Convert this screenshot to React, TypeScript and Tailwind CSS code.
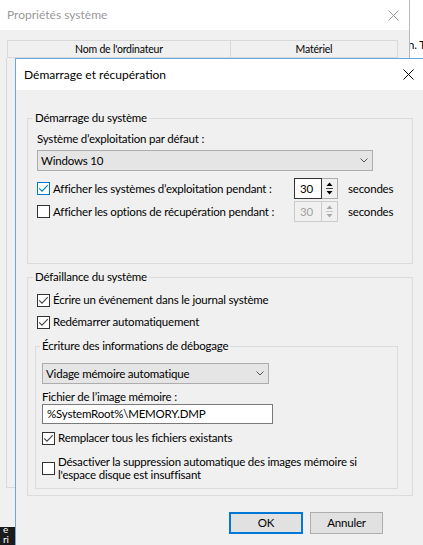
import React from "react";

const font = "font-['Lato','Segoe_UI',sans-serif]";

function Check({ checked = false, focus = false }: { checked?: boolean; focus?: boolean }) {
  return (
    <span
      className={`flex h-[13px] w-[13px] shrink-0 items-center justify-center border bg-white ${
        focus ? "border-[#0078d7]" : "border-[#333333]"
      }`}
    >
      {checked && (
        <svg width="11" height="11" viewBox="0 0 11 11">
          <path d="M1.2 5.3 L4 8.2 L9.8 2.2" fill="none" stroke={focus ? "#0078d7" : "#444444"} strokeWidth="1.1" />
        </svg>
      )}
    </span>
  );
}

function Chevron() {
  return (
    <svg width="8" height="5" viewBox="0 0 8 5">
      <path d="M0.5 0.5 L4 4 L7.5 0.5" fill="none" stroke="#555555" strokeWidth="1" />
    </svg>
  );
}

function Spinner({ disabled = false }: { disabled?: boolean }) {
  const arrow = disabled ? "#a8a8a8" : "#000000";
  return (
    <div className="flex h-[21px] w-[44px] shrink-0">
      <div
        className={`flex w-[28px] items-center border pl-[5px] ${
          disabled ? "border-[#cccccc] bg-[#f0f0f0] text-[#a0a0a0]" : "border-[#333333] bg-white text-black"
        }`}
      >
        30
      </div>
      <div className={`w-[16px] border border-l-0 ${disabled ? "border-[#cccccc]" : "border-[#adadad]"}`}>
        <svg width="15" height="19" viewBox="0 0 15 19">
          <path d="M4.5 7 L7.5 3.5 L10.5 7 Z" fill={arrow} />
          <path d="M4 9.5 H11" stroke={disabled ? "#c8c8c8" : "#444444"} strokeWidth="1" />
          <path d="M4.5 12 L7.5 15.5 L10.5 12 Z" fill={arrow} />
        </svg>
      </div>
    </div>
  );
}

function CloseX({ color }: { color: string }) {
  return (
    <svg width="11" height="11" viewBox="0 0 11 11">
      <path d="M0.5 0.5 L10.5 10.5 M10.5 0.5 L0.5 10.5" stroke={color} strokeWidth="1" />
    </svg>
  );
}

export default function App() {
  return (
    <div
      className={`relative h-[545px] w-[423px] overflow-hidden bg-[#f0f0f0] text-[11.5px] leading-[16px] tracking-[-0.2px] text-black ${font}`}
    >
      {/* window behind: Propriétés système */}
      <div className="absolute left-0 top-0 h-[545px] w-[410px] border-r border-[#b8b8b8] bg-[#f0f0f0]">
        <div className="flex h-[30px] items-center justify-between bg-white pl-[7px] pr-[10px] text-[12px] tracking-normal text-[#999999]">
          <span>Propriétés système</span>
          <CloseX color="#9a9a9a" />
        </div>
        <div className="ml-[7px] mt-[10px] flex h-[18px] w-[391px] text-[10.5px]">
          <div className="flex w-[224px] items-center justify-center border border-[#d9d9d9]">Nom de l'ordinateur</div>
          <div className="flex w-[167px] items-center justify-center border border-l-0 border-[#d9d9d9]">Matériel</div>
        </div>
        <div className="ml-[6px] h-[430px] w-[392px] border border-t-0 border-[#d9d9d9]" />
      </div>

      {/* another window at the right edge */}
      <div className="absolute left-[410px] top-0 h-[58px] w-[13px] overflow-hidden bg-white">
        <div className="-ml-[2px] mt-[37px] whitespace-nowrap">n. T</div>
      </div>

      {/* desktop corner */}
      <div className="absolute left-0 top-[527px] h-[18px] w-[15px] overflow-hidden bg-[#1b1b1b] text-[10px] leading-[10px] text-white">
        <div className="-mt-[3px] pl-[3px]">e</div>
        <div className="pl-[3px]">ri</div>
      </div>

      {/* Démarrage et récupération */}
      <div className="absolute left-[15px] top-[58px] h-[500px] w-[430px] border-l border-t border-[#6aa6de] bg-[#f0f0f0]">
        <div className="flex h-[31px] items-center bg-white pl-[8px]">
          <span className="w-[379px] text-[12px] tracking-normal">Démarrage et récupération</span>
          <CloseX color="#000000" />
        </div>

        <div className="whitespace-nowrap pl-[11px] pt-[20px]">
          <fieldset className="h-[154px] w-[386px] border border-[#dcdcdc]">
            <legend className="ml-[5px] px-[2px]">Démarrage du système</legend>
            <div className="pl-[9px]">
              <div className="mt-[5px]">Système d’exploitation par défaut :</div>
              <div className="mt-[3px] flex h-[21px] w-[336px] items-center justify-between border border-[#adadad] bg-[#e5e5e5] pl-[3px] pr-[4px]">
                <span>Windows 10</span>
                <Chevron />
              </div>
              <div className="mt-[7px] flex h-[21px] items-center">
                <Check checked focus />
                <span className="w-[244px] shrink-0 pl-[3px]">Afficher les systèmes d’exploitation pendant :</span>
                <Spinner />
                <span className="ml-[10px]">secondes</span>
              </div>
              <div className="mt-[2px] flex h-[21px] items-center">
                <Check />
                <span className="w-[244px] shrink-0 pl-[3px]">Afficher les options de récupération pendant :</span>
                <Spinner disabled />
                <span className="ml-[10px]">secondes</span>
              </div>
            </div>
          </fieldset>

          <fieldset className="mt-[5px] h-[227px] w-[386px] border border-[#dcdcdc]">
            <legend className="ml-[5px] px-[2px]">Défaillance du système</legend>
            <div className="pl-[7px]">
              <div className="ml-[2px] mt-[7px] flex items-center">
                <Check checked />
                <span className="pl-[3px]">Écrire un événement dans le journal système</span>
              </div>
              <div className="ml-[2px] mt-[6px] flex items-center">
                <Check checked />
                <span className="pl-[3px]">Redémarrer automatiquement</span>
              </div>

              <fieldset className="mt-[8px] h-[151px] w-[363px] border border-[#dcdcdc]">
                <legend className="ml-[4px] px-[2px]">Écriture des informations de débogage</legend>
                <div className="pl-[6px]">
                  <div className="mt-[9px] flex h-[21px] w-[227px] items-center justify-between border border-[#adadad] bg-[#e5e5e5] pl-[3px] pr-[4px]">
                    <span>Vidage mémoire automatique</span>
                    <Chevron />
                  </div>
                  <div className="mt-[6px] leading-[14px]">Fichier de l’image mémoire :</div>
                  <div className="flex h-[20px] w-[231px] items-center border border-[#7a7a7a] bg-white pl-[4px]">
                    %SystemRoot%\MEMORY.DMP
                  </div>
                  <div className="mt-[6px] flex items-center">
                    <Check checked />
                    <span className="pl-[3px]">Remplacer tous les fichiers existants</span>
                  </div>
                  <div className="mt-[9px] flex items-center">
                    <Check />
                    <span className="pl-[3px] leading-[13px]">
                      Désactiver la suppression automatique des images mémoire si
                      <br />
                      l'espace disque est insuffisant
                    </span>
                  </div>
                </div>
              </fieldset>
            </div>
          </fieldset>
        </div>

        <div className="ml-[213px] mt-[16px] flex gap-[7px]">
          <button className="h-[22px] w-[74px] border-2 border-[#0078d7] bg-[#e1e1e1]">OK</button>
          <button className="h-[22px] w-[73px] border border-[#adadad] bg-[#e1e1e1]">Annuler</button>
        </div>
      </div>
    </div>
  );
}
